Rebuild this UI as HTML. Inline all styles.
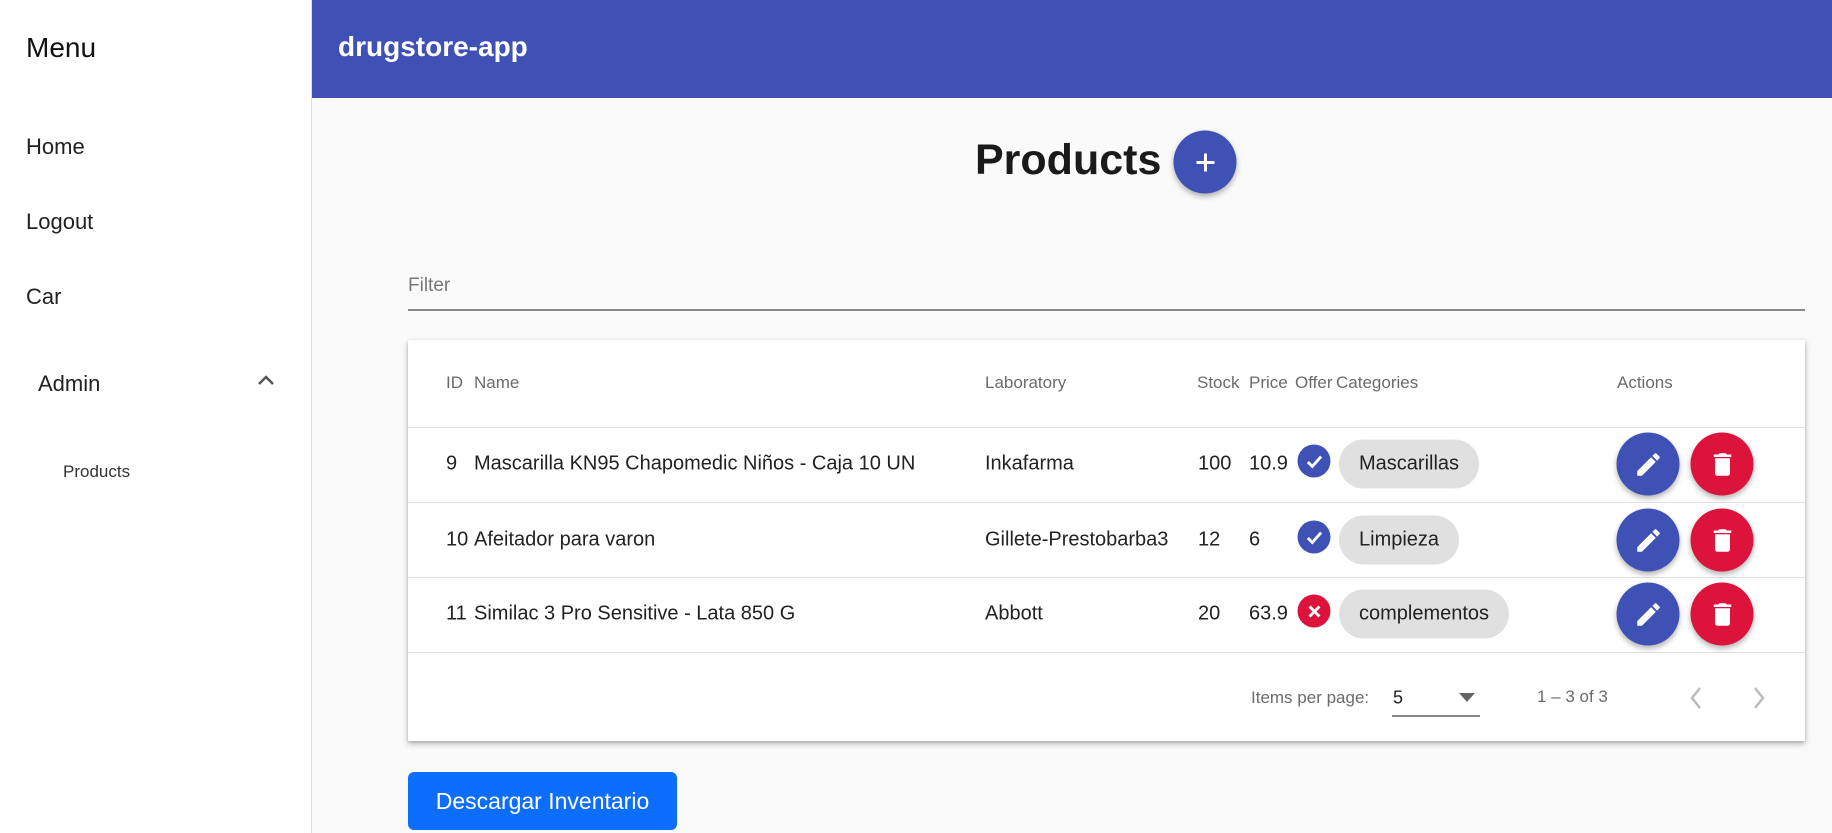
<!DOCTYPE html>
<html><head><meta charset="utf-8"><style>
*{box-sizing:border-box;margin:0;padding:0}
body{width:1832px;height:833px;overflow:hidden;font-family:"Liberation Sans",sans-serif;background:#fafafa;position:relative;color:#212121}
.side{position:absolute;left:0;top:0;width:312px;height:833px;background:#fff;border-right:1px solid #e0e0e0}
.abs{position:absolute;white-space:nowrap}
.hdr{position:absolute;left:312px;top:0;right:0;height:98px;background:#3f51b5}
.card{position:absolute;left:408px;top:340px;width:1397px;height:401px;background:#fff;box-shadow:0 3px 6px rgba(0,0,0,.25),0 1px 3px rgba(0,0,0,.15)}
.sep{position:absolute;left:0;right:0;height:1px;background:#e0e0e0}
.th{position:absolute;font-size:17px;color:#6b6b6b;transform:translateY(-50%)}
.td{position:absolute;font-size:20px;color:#222;transform:translateY(-50%);white-space:nowrap}
.chip{position:absolute;height:49px;border-radius:25px;background:#e0e0e0;font-size:20px;line-height:49px;padding:0 20px;transform:translateY(-50%);color:#222}
.fab{position:absolute;width:63px;height:63px;border-radius:50%;transform:translate(-50%,-50%);box-shadow:0 3px 6px rgba(0,0,0,.3);display:flex;align-items:center;justify-content:center}
.ic{position:absolute;width:33px;height:33px;border-radius:50%;transform:translate(-50%,-50%);display:flex;align-items:center;justify-content:center}
</style></head><body>
<div class="side">
<div class="abs" style="left:26px;top:32px;font-size:28px;color:#111">Menu</div>
<div class="abs" style="left:26px;top:134px;font-size:22px">Home</div>
<div class="abs" style="left:26px;top:209px;font-size:22px">Logout</div>
<div class="abs" style="left:26px;top:284px;font-size:22px">Car</div>
<div class="abs" style="left:38px;top:371px;font-size:22px">Admin</div>
<svg class="abs" style="left:256px;top:373px" width="20" height="14" viewBox="0 0 20 14"><path d="M3 11 L10 4 L17 11" fill="none" stroke="#555" stroke-width="2.5"/></svg>
<div class="abs" style="left:63px;top:462px;font-size:17px;color:#333">Products</div>
</div>
<div class="hdr"><div class="abs" style="left:26px;top:31px;font-size:28px;color:#fff;font-weight:bold">drugstore-app</div></div>
<div class="abs" style="left:975px;top:136px;font-size:43px;font-weight:bold;color:#1a1a1a">Products</div>
<div class="fab" style="left:1205px;top:162px;background:#3f51b5"><svg width="28" height="28" viewBox="0 0 28 28"><path d="M14 5v18M5 14h18" stroke="#fff" stroke-width="3"/></svg></div>
<div class="abs" style="left:408px;top:275px;font-size:19px;color:#777">Filter</div>
<div class="abs" style="left:408px;top:309px;width:1397px;height:2px;background:#888"></div>
<div class="card">
<div class="th" style="left:38px;top:43px">ID</div>
<div class="th" style="left:66px;top:43px">Name</div>
<div class="th" style="left:577px;top:43px">Laboratory</div>
<div class="th" style="left:789px;top:43px">Stock</div>
<div class="th" style="left:841px;top:43px">Price</div>
<div class="th" style="left:887px;top:43px">Offer</div>
<div class="th" style="left:928px;top:43px">Categories</div>
<div class="th" style="left:1209px;top:43px">Actions</div>
<div class="sep" style="top:87px"></div><div class="sep" style="top:162px"></div><div class="sep" style="top:237px"></div><div class="sep" style="top:312px"></div>

<div class="td" style="left:38px;top:124px">9</div><div class="td" style="left:66px;top:124px">Mascarilla KN95 Chapomedic Niños - Caja 10 UN</div>
<div class="td" style="left:577px;top:124px">Inkafarma</div><div class="td" style="left:790px;top:124px">100</div><div class="td" style="left:841px;top:124px">10.9</div>
<div class="ic" style="left:906px;top:121px;background:#3f51b5"><svg width="22" height="22" viewBox="0 0 20 20"><path d="M4 10.5l4 4 8-9" fill="none" stroke="#fff" stroke-width="2.6"/></svg></div>
<div class="chip" style="left:931px;top:124px">Mascarillas</div>

<div class="td" style="left:38px;top:200px">10</div><div class="td" style="left:66px;top:200px">Afeitador para varon</div>
<div class="td" style="left:577px;top:200px">Gillete-Prestobarba3</div><div class="td" style="left:790px;top:200px">12</div><div class="td" style="left:841px;top:200px">6</div>
<div class="ic" style="left:906px;top:197px;background:#3f51b5"><svg width="22" height="22" viewBox="0 0 20 20"><path d="M4 10.5l4 4 8-9" fill="none" stroke="#fff" stroke-width="2.6"/></svg></div>
<div class="chip" style="left:931px;top:200px">Limpieza</div>

<div class="td" style="left:38px;top:274px">11</div><div class="td" style="left:66px;top:274px">Similac 3 Pro Sensitive - Lata 850 G</div>
<div class="td" style="left:577px;top:274px">Abbott</div><div class="td" style="left:790px;top:274px">20</div><div class="td" style="left:841px;top:274px">63.9</div>
<div class="ic" style="left:906px;top:271px;background:#dc143c"><svg width="22" height="22" viewBox="0 0 20 20"><path d="M5.5 5.5l9 9M14.5 5.5l-9 9" stroke="#fff" stroke-width="2.6"/></svg></div>
<div class="chip" style="left:931px;top:274px">complementos</div>

<div class="fab" style="left:1240px;top:124px;background:#3f51b5"><svg width="30" height="30" viewBox="0 0 24 24"><path d="M3 17.25V21h3.75L17.81 9.94l-3.75-3.750L3 17.25zM20.71 7.04a1 1 0 000-1.41l-2.34-2.34a1 1 0 00-1.41 0l-1.830 1.83 3.75 3.75 1.83-1.83z" fill="#fff"/></svg></div>
<div class="fab" style="left:1314px;top:124px;background:#dc143c"><svg width="30" height="30" viewBox="0 0 24 24"><path d="M6 19c0 1.1.9 2 2 2h8c1.1 0 2-.9 2-2V7H6v12zM19 4h-3.5l-1-1h-5l-1 1H5v2h14V4z" fill="#fff"/></svg></div>
<div class="fab" style="left:1240px;top:200px;background:#3f51b5"><svg width="30" height="30" viewBox="0 0 24 24"><path d="M3 17.25V21h3.75L17.81 9.94l-3.75-3.75L3 17.25zM20.71 7.04a1 1 0 000-1.41l-2.34-2.34a1 1 0 00-1.41 0l-1.83 1.83 3.75 3.75 1.83-1.83z" fill="#fff"/></svg></div>
<div class="fab" style="left:1314px;top:200px;background:#dc143c"><svg width="30" height="30" viewBox="0 0 24 24"><path d="M6 19c0 1.1.9 2 2 2h8c1.1 0 2-.9 2-2V7H6v12zM19 4h-3.5l-1-1h-5l-1 1H5v2h14V4z" fill="#fff"/></svg></div>
<div class="fab" style="left:1240px;top:274px;background:#3f51b5"><svg width="30" height="30" viewBox="0 0 24 24"><path d="M3 17.25V21h3.75L17.81 9.94l-3.75-3.75L3 17.25zM20.71 7.04a1 1 0 000-1.41l-2.34-2.34a1 1 0 00-1.41 0l-1.83 1.83 3.75 3.75 1.83-1.83z" fill="#fff"/></svg></div>
<div class="fab" style="left:1314px;top:274px;background:#dc143c"><svg width="30" height="30" viewBox="0 0 24 24"><path d="M6 19c0 1.1.9 2 2 2h8c1.1 0 2-.9 2-2V7H6v12zM19 4h-3.5l-1-1h-5l-1 1H5v2h14V4z" fill="#fff"/></svg></div>

<div class="th" style="left:843px;top:358px;font-size:17px">Items per page:</div>
<div class="td" style="left:985px;top:358px;font-size:18px">5</div>
<svg class="abs" style="left:1051px;top:353px" width="16" height="10"><path d="M0 0h16L8 9z" fill="#666"/></svg>
<div class="abs" style="left:984px;top:375px;width:88px;height:2px;background:#888"></div>
<div class="th" style="left:1129px;top:357px;font-size:17px">1 – 3 of 3</div>
<svg class="abs" style="left:1280px;top:345px" width="16" height="26"><path d="M12 3L4 13l8 10" fill="none" stroke="#bbb" stroke-width="2.5"/></svg>
<svg class="abs" style="left:1343px;top:345px" width="16" height="26"><path d="M4 3l8 10-8 10" fill="none" stroke="#bbb" stroke-width="2.5"/></svg>
</div>
<div class="abs" style="left:408px;top:772px;width:269px;height:58px;background:#0d6efd;border-radius:6px;color:#fff;font-size:23px;line-height:58px;text-align:center">Descargar Inventario</div>
</body></html>
